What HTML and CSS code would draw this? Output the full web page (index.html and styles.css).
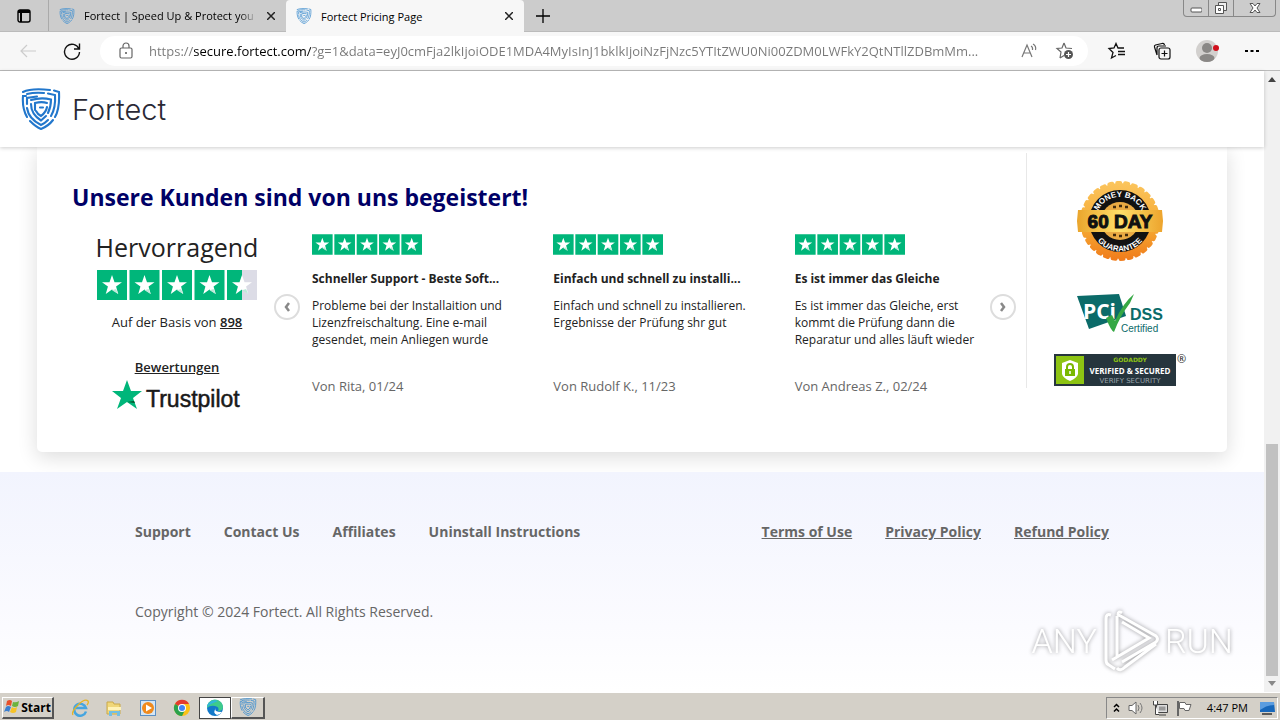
FILE: index.html
```html
<!DOCTYPE html>
<html lang="de">
<head>
    <meta charset="UTF-8">
    <meta name="viewport" content="width=device-width, initial-scale=1.0">
    <title>Fortect Pricing Page</title>
    <link rel="stylesheet" href="styles.css">
</head>
<body>
    <!-- Shared shapes -->
    <svg class="defs" width="0" height="0" aria-hidden="true">
        <symbol id="shield" viewBox="0 0 40 42">
            <g fill="none" stroke="currentColor" stroke-width="2.1" stroke-linecap="round">
                <path d="M2 4C8 1 20 1 29 2M33 2.500L38 4C38.500 14 38 22 34 29M32 32C29 36 25 39 20 41C15 39 12 36 9 33M6 29C2 22 1.500 14 2 8H5"/>
                <path d="M6 6C12 4.500 18 4.500 23 5M27 5.500L34 7C34.500 14 33.500 22 30 28M27 32C25 34 23 36 20 37C12 33 7 27 6 20M6 16V10L16 8.500"/>
                <path d="M10 12C17 10 24 10 30 11.500C30 17 29 21 27 25M25 28L20 32.500C13 28 10 23 10 16"/>
                <path d="M14 22V15C18 14 23 14 26 15M26 19C25.500 22 24 25 20 28C18 27 16 25 15 23M19 19.500H22"/>
            </g>
        </symbol>
        <symbol id="star" viewBox="0 0 96 96">
            <path fill="#fff" d="M48 16L56 39H80L61 53L68 77L48 62L28 77L35 53L16 39H40Z"/>
            <path fill="#bfe9da" d="M48 65L61 61L68 77Z"/>
        </symbol>
        <symbol id="stars" viewBox="0 0 512 96">
            <path fill="#00b67a" d="M0 0H96V96H0ZM104 0H200V96H104ZM208 0H304V96H208ZM312 0H408V96H312ZM416 0H512V96H416Z"/>
            <use href="#star" x="0" width="96" height="96"/>
            <use href="#star" x="104" width="96" height="96"/>
            <use href="#star" x="208" width="96" height="96"/>
            <use href="#star" x="312" width="96" height="96"/>
            <use href="#star" x="416" width="96" height="96"/>
        </symbol>
    </svg>

    <!-- Browser tabs -->
    <div class="tabs">
        <button class="tab-menu" aria-label="Tab actions">
            <svg width="14" height="14" viewBox="0 0 14 14"><rect x="1" y="1" width="12" height="12" rx="2" fill="none" stroke="#000" stroke-width="1.400"/><path d="M1 1H13V4H1ZM3 4H5V13H3Z"/></svg>
        </button>
        <div class="tab">
            <svg class="tab-icon" width="16" height="16"><use href="#shield"/></svg>
            <span class="tab-title tab-fade">Fortect | Speed Up &amp; Protect you</span>
            <button class="tab-close" aria-label="Close tab"><svg width="8" height="8" viewBox="0 0 8 8"><path d="M0 0L8 8M8 0L0 8" stroke="#222" stroke-width="1.500"/></svg></button>
        </div>
        <div class="tab tab-active">
            <svg class="tab-icon" width="16" height="16"><use href="#shield"/></svg>
            <span class="tab-title">Fortect Pricing Page</span>
            <button class="tab-close" aria-label="Close tab"><svg width="8" height="8" viewBox="0 0 8 8"><path d="M0 0L8 8M8 0L0 8" stroke="#222" stroke-width="1.500"/></svg></button>
        </div>
        <button class="tab-new" aria-label="New tab"><svg width="14" height="14" viewBox="0 0 14 14"><path d="M7 0V14M0 7H14" stroke="#000" stroke-width="1.300"/></svg></button>
        <div class="window-buttons">
            <button aria-label="Minimize"><svg width="12" height="12" viewBox="0 0 12 12"><rect x="1" y="6" width="11" height="4" rx="1" fill="#fff" stroke="#555"/></svg></button>
            <button aria-label="Restore"><svg width="14" height="14" viewBox="0 0 14 14"><path d="M4.500 1.500H12.500V9.500H4.500Z" fill="#eee" stroke="#555"/><path d="M1.500 4.500H9.500V12.500H1.500Z" fill="#fff" stroke="#555"/><path d="M4.500 7.500H6.500V9.500H4.500Z" fill="none" stroke="#555"/></svg></button>
            <button class="window-close" aria-label="Close"><svg width="12" height="12" viewBox="0 0 12 12"><path d="M1 1.500H4L6 4L8 1.500H11L8 6L11 10.500H8L6 8L4 10.500H1L4 6Z" fill="#fff" stroke="#555"/></svg></button>
        </div>
    </div>

    <!-- Address bar -->
    <div class="toolbar">
        <button class="nav-button" aria-label="Back" disabled><svg width="16" height="14" viewBox="0 0 16 14"><path d="M16 7H1M7 1L1 7L7 13" fill="none" stroke="#ccc" stroke-width="1.200"/></svg></button>
        <button class="nav-button" aria-label="Refresh"><svg width="18" height="18" viewBox="0 0 18 18"><path d="M16 7A7.500 7.500 0 1 0 16.500 10M16.500 1.500V7H11" fill="none" stroke="#111" stroke-width="1.400"/></svg></button>
        <div class="address">
            <svg width="14" height="18" viewBox="0 0 14 18"><rect x="1" y="6" width="12" height="10" rx="1.500" fill="none" stroke="#666" stroke-width="1.200"/><path d="M4 6V4A3 3 0 0 1 10 4V6" fill="none" stroke="#666" stroke-width="1.200"/><circle cx="7" cy="11" r="1" fill="#555"/></svg>
            <input class="address-input" type="text" aria-label="Address" value="https://secure.fortect.com/?g=1&amp;data=eyJ0cmFja2lkIjoiODE1MDA4MyIsInJ1bklkIjoiNzFjNzc5YTItZWU0Ni00ZDM0LWFkY2QtNTllZDBmMm...">
            <button class="address-button" aria-label="Read aloud"><svg width="18" height="18" viewBox="0 0 18 18"><path d="M2 15L7 3L12 15M4 11H10M11 4Q13 5 12.500 8M13 2Q16.500 4 15.500 8" fill="none" stroke="#777" stroke-width="1.200"/></svg></button>
            <button class="address-button" aria-label="Add to favourites"><svg width="20" height="20" viewBox="0 0 20 20"><path d="M9 2L11 7L17 7.500M5 17L6 11L2 7.500L7 7L9 2M5 17L9 14.500" fill="none" stroke="#666" stroke-width="1.200"/><circle cx="13.500" cy="13.500" r="4.500" fill="#555"/><path d="M13.500 11V16M11 13.500H16" stroke="#fff" stroke-width="1.200"/></svg></button>
        </div>
        <div class="tools">
            <button aria-label="Favourites"><svg width="20" height="18" viewBox="0 0 20 18"><path d="M17 6H11L9 1.500L7 6L2 6.500L6 10.500L4.500 16L9 13.500M11 9.500H18M11 12.500H18" fill="none" stroke="#111" stroke-width="1.300"/></svg></button>
            <button aria-label="Collections"><svg width="18" height="18" viewBox="0 0 18 18"><path d="M4 13L1.500 5Q1 3.500 2.500 3L9 1.500Q11 1 11.500 3M4 13V6Q4 4 6 4H13" fill="none" stroke="#111" stroke-width="1.200"/><rect x="6" y="6" width="11" height="11" rx="2" fill="#f7f7f7" stroke="#111" stroke-width="1.200"/><path d="M11.500 8.500V14.500M8.500 11.500H14.500" stroke="#111" stroke-width="1.200"/></svg></button>
            <button aria-label="Profile"><svg width="24" height="24" viewBox="0 0 24 24"><circle cx="12" cy="12" r="11" fill="#d2d0ce"/><circle cx="12" cy="9" r="5" fill="#8a8886"/><ellipse cx="12" cy="19" rx="7.500" ry="4" fill="#8a8886"/><circle cx="21" cy="9" r="3" fill="#d0101c"/></svg></button>
            <button aria-label="Settings"><svg width="14" height="4" viewBox="0 0 14 4"><path d="M0 1H3V3H0ZM5.500 1H8.500V3H5.500ZM11 1H14V3H11Z"/></svg></button>
        </div>
    </div>

    <div class="viewport">
        <div class="page">
            <header class="page-header">
                <svg class="logo-shield" width="40" height="42"><use href="#shield"/></svg>
                <span class="logo-name">Fortect</span>
            </header>

            <main class="main">
                <div class="card">
                    <section class="reviews">
                        <h2>Unsere Kunden sind von uns begeistert!</h2>
                        <div class="carousel">
                            <div class="rating">
                                <p class="rating-word">Hervorragend</p>
                                <svg class="rating-stars" width="160" height="30" viewBox="0 0 512 96">
                                    <path fill="#00b67a" d="M0 0H96V96H0ZM104 0H200V96H104ZM208 0H304V96H208ZM312 0H408V96H312ZM416 0H464V96H416Z"/>
                                    <path fill="#dcdce6" d="M464 0H512V96H464Z"/>
                                    <use href="#star" x="0" width="96" height="96"/>
                                    <use href="#star" x="104" width="96" height="96"/>
                                    <use href="#star" x="208" width="96" height="96"/>
                                    <use href="#star" x="312" width="96" height="96"/>
                                    <use href="#star" x="416" width="96" height="96"/>
                                </svg>
                                <p class="rating-count">Auf der Basis von <a href="#">898 <span>Bewertungen</span></a></p>
                                <svg class="trustpilot" width="132" height="34" viewBox="0 0 132 34" role="img" aria-label="Trustpilot">
                                    <path fill="#00b67a" d="M16 1L20 12H31L22 19L26 30L16 23L6 30L10 19L1 12H12Z"/>
                                    <path fill="#005128" d="M23 22L24 24L16 23Z"/>
                                    <text x="35" y="28" font-size="23" fill="#191919" stroke="#191919" stroke-width=".5">Trustpilot</text>
                                </svg>
                            </div>
                            <button class="arrow" aria-label="Zurück"><svg width="8" height="10" viewBox="0 0 8 10"><path d="M6 1L3 5L6 9" fill="none" stroke="#888" stroke-width="2.500"/></svg></button>
                            <div class="review-list">
                                <article class="review">
                                    <svg width="110" height="21"><use href="#stars"/></svg>
                                    <h3>Schneller Support - Beste Soft...</h3>
                                    <p>Probleme bei der Installaition und Lizenzfreischaltung. Eine e-mail gesendet, mein Anliegen wurde</p>
                                    <footer>Von Rita, 01/24</footer>
                                </article>
                                <article class="review">
                                    <svg width="110" height="21"><use href="#stars"/></svg>
                                    <h3>Einfach und schnell zu installi...</h3>
                                    <p>Einfach und schnell zu installieren. Ergebnisse der Prüfung shr gut</p>
                                    <footer>Von Rudolf K., 11/23</footer>
                                </article>
                                <article class="review">
                                    <svg width="110" height="21"><use href="#stars"/></svg>
                                    <h3>Es ist immer das Gleiche</h3>
                                    <p>Es ist immer das Gleiche, erst kommt die Prüfung dann die Reparatur und alles läuft wieder</p>
                                    <footer>Von Andreas Z., 02/24</footer>
                                </article>
                            </div>
                            <button class="arrow" aria-label="Weiter"><svg width="8" height="10" viewBox="0 0 8 10"><path d="M2 1L5 5L2 9" fill="none" stroke="#888" stroke-width="2.500"/></svg></button>
                        </div>
                    </section>

                    <aside class="badges">
                        <svg class="seal" width="86" height="82" viewBox="0 0 86 82">
                            <defs>
                                <linearGradient id="gold" x1="0" y1="0" x2="0" y2="1"><stop offset="0" stop-color="#fbc45c"/><stop offset=".6" stop-color="#f5a832"/><stop offset="1" stop-color="#f07d1c"/></linearGradient>
                                <linearGradient id="ribbon" x1="0" y1="0" x2="1" y2="0"><stop offset="0" stop-color="#eaa52c"/><stop offset=".5" stop-color="#ffdf69"/><stop offset="1" stop-color="#eda42d"/></linearGradient>
                                <path id="seal-top" d="M20 34A24 24 0 0 1 66 34"/>
                                <path id="seal-bottom" d="M15 50A29 29 0 0 0 71 50"/>
                            </defs>
                            <circle cx="43" cy="41" r="38" fill="url(#gold)"/>
                            <circle cx="43" cy="41" r="38" fill="none" stroke="url(#gold)" stroke-width="4" stroke-linecap="round" stroke-dasharray="3 5"/>
                            <circle cx="43" cy="41" r="31" fill="#111"/>
                            <circle cx="43" cy="41" r="19" fill="#e9aa43"/>
                            <path d="M36 27H39M42 26H45M48 27H51M36 55H39M42 56H45M48 55H51" stroke="#422b0c" stroke-width="2.500"/>
                            <path d="M1 30H85L86 41L85 52H1L0 41Z" fill="url(#ribbon)"/>
                            <text class="seal-days" x="43" y="48" text-anchor="middle">60 DAY</text>
                            <text class="seal-arc"><textPath href="#seal-top" startOffset="50%" text-anchor="middle">MONEY BACK</textPath></text>
                            <text class="seal-arc"><textPath href="#seal-bottom" startOffset="50%" text-anchor="middle">GUARANTEE</textPath></text>
                        </svg>
                        <svg class="pci" width="88" height="42" viewBox="0 0 88 42">
                            <path fill="#0b6b69" d="M1 3L43 1L50 23L13 36Z"/>
                            <text class="pci-name" x="7" y="26">PCi</text>
                            <text class="pci-dss" x="54" y="27">DSS</text>
                            <text class="pci-certified" x="45" y="39">Certified</text>
                            <path fill="#35a844" d="M30 25L36 22L39 28Q47 10 58 1L54 10Q44 23 38 39Q35 38 30 25Z"/>
                        </svg>
                        <a class="secured" href="#">
                            <svg width="122" height="32" viewBox="0 0 122 32">
                                <path fill="#26353d" d="M0 0H122V32H0Z"/>
                                <path fill="#8dc413" d="M2 2H30V30H2Z"/>
                                <path fill="#fff" d="M16 6L24 9V20Q23 24 16 27Q9 24 8 20V9Z"/>
                                <path fill="#7ab800" d="M11 15H21V22H11Z"/>
                                <path d="M13 15V13Q13 10 16 10Q19 10 19 13V15" fill="none" stroke="#7ab800" stroke-width="2"/>
                                <path d="M16 17V20" stroke="#fff" stroke-width="1.500"/>
                                <text class="secured-brand" x="76" y="8" text-anchor="middle">GODADDY</text>
                                <text class="secured-main" x="76" y="20" text-anchor="middle">VERIFIED &amp; SECURED</text>
                                <text class="secured-sub" x="76" y="29" text-anchor="middle">VERIFY SECURITY</text>
                            </svg>
                            <span>®</span>
                        </a>
                    </aside>
                </div>
            </main>

            <footer class="page-footer">
                <div class="footer-links">
                    <nav class="links">
                        <a href="#">Support</a>
                        <a href="#">Contact Us</a>
                        <a href="#">Affiliates</a>
                        <a href="#">Uninstall Instructions</a>
                    </nav>
                    <nav class="links legal">
                        <a href="#">Terms of Use</a>
                        <a href="#">Privacy Policy</a>
                        <a href="#">Refund Policy</a>
                    </nav>
                </div>
                <p>Copyright © 2024 Fortect. All Rights Reserved.</p>
            </footer>
        </div>

        <div class="scrollbar">
            <svg width="8" height="5" viewBox="0 0 8 5"><path fill="#444" d="M0 5L4 0L8 5Z"/></svg>
            <div class="scroll-track"><div class="scroll-thumb"></div></div>
            <svg width="8" height="5" viewBox="0 0 8 5"><path fill="#888" d="M0 0L4 5L8 0Z"/></svg>
        </div>

        <div class="watermark">
            <span>ANY</span>
            <svg width="62" height="66" viewBox="0 0 62 66">
                <path d="M11 7Q6 5 6 11V52Q6 56 9 57L15 61M17 8V48M17 6L56 28Q59 31 56 34L22 54M18 7Q18 2 22 5M22 14L49 30L12 52M17 60Q20 64 25 59L56 36" fill="none" stroke="#fff" stroke-width="3"/>
            </svg>
            <span>RUN</span>
        </div>
    </div>

    <!-- Taskbar -->
    <div class="taskbar">
        <button class="start">
            <svg width="16" height="16" viewBox="0 0 16 16"><path fill="#e8502a" d="M3 2Q6 0 8 2L7 7Q4 5 2 7Z"/><path fill="#6cb33e" d="M9 3Q12 4 15 2L14 7Q11 9 8 7Z"/><path fill="#3b7fd0" d="M2 8Q4 6 7 8L5 13Q3 11 0 13Z"/><path fill="#f7c326" d="M8 8Q10 10 13 8L12 13Q9 15 6 13Z"/></svg>
            Start
        </button>
        <div class="launchers">
            <button aria-label="Internet Explorer"><svg width="18" height="18" viewBox="0 0 18 18"><path d="M15 12.500A6 6 0 1 1 15 9H5" fill="none" stroke="#45a5e0" stroke-width="2.500"/><path d="M2 16Q0 13 7 6T17 2Q18 4 16 6" fill="none" stroke="#e6b422" stroke-width="1.300"/></svg></button>
            <button aria-label="Explorer"><svg width="18" height="18" viewBox="0 0 18 18"><path d="M2 3H8L9 5H15V15H2Z" fill="#f0d77a" stroke="#c9a94a"/><path d="M3 8H16V11H3Z" fill="#fff3b8"/><path d="M4 17V12H15V17H12V14H7V17Z" fill="#73bfe3"/></svg></button>
            <button aria-label="Media Player"><svg width="18" height="18" viewBox="0 0 18 18"><rect x="1.500" y="1.500" width="15" height="15" fill="#d5e6f5" stroke="#5a8fc4"/><circle cx="9" cy="9" r="6" fill="#f08a1d"/><path d="M7 5.500L13 9L7 12.500Z" fill="#fff"/></svg></button>
            <button aria-label="Chrome"><svg width="18" height="18" viewBox="0 0 18 18"><circle cx="9" cy="9" r="8" fill="#fbc116"/><path d="M9 9L2 5A8 8 0 0 1 16 5H9Z" fill="#e33b2e"/><path d="M9 9L2 5A8 8 0 0 0 9 17L12 11Z" fill="#2ba24c"/><circle cx="9" cy="9" r="4" fill="#fff"/><circle cx="9" cy="9" r="3" fill="#4285f4"/></svg></button>
            <button class="pressed" aria-label="Edge"><svg width="18" height="18" viewBox="0 0 18 18"><circle cx="9" cy="9" r="8" fill="#1379c9"/><path d="M1 9A8 8 0 0 1 17 8Q17 12 12 12Q14 8 9 7Q4 6 1 9Z" fill="#3ecb8b"/><path d="M1 8A8 8 0 0 1 12 2Q6 4 1 8Z" fill="#31b6dd"/><path d="M10 9Q7 13 16 13Q14 16 11 16Q6 14 10 9Z" fill="#fff"/></svg></button>
            <button class="raised" aria-label="Fortect"><svg class="tab-icon" width="18" height="18"><use href="#shield"/></svg></button>
        </div>
        <div class="tray">
            <svg width="7" height="10" viewBox="0 0 7 10"><path d="M1 4L3.500 1.500L6 4M1 8.500L3.500 6L6 8.500" fill="none" stroke="#000" stroke-width="1.500"/></svg>
            <svg width="16" height="16" viewBox="0 0 16 16"><path d="M1 5.500H4L8 2V14L4 10.500H1Z" fill="#fff" stroke="#666"/><path d="M10 5Q12 8 10 11M12 3Q16 8 12 13" fill="none" stroke="#777"/></svg>
            <svg width="16" height="16" viewBox="0 0 16 16"><path d="M4.500 4.500H15.500V12.500H4.500ZM7 15H14" fill="#ddd" stroke="#444"/><path d="M7 6.500H13.500V10.500H7Z" fill="#999"/><path d="M1.500 1V5H5.500V1M3.500 5V14.500H7" fill="#fff" stroke="#444"/></svg>
            <svg width="16" height="16" viewBox="0 0 16 16"><path d="M2 1V16" stroke="#666" stroke-width="2"/><path d="M3.500 2.500H9L10 4.500H15L13 10.500H9L8 8.500H3.500Z" fill="#fff" stroke="#666"/></svg>
            <span class="clock">4:47 PM</span>
            <svg width="16" height="14" viewBox="0 0 16 14"><path d="M1 1H15L16 11H1Z" fill="#1767ba"/><path d="M1 1H15V4Q8 4 1 9Z" fill="#5b9de0"/><path d="M3 13H13" stroke="#333" stroke-width="1.500"/></svg>
        </div>
    </div>
</body>
</html>
```
FILE: styles.css
```css
* {
    box-sizing: border-box;
}
body {
    display: flex;
    flex-direction: column;
    height: 100vh;
    margin: 0;
    overflow: hidden;
    background: white;
    color: #222;
    font-family: 'Open Sans', 'Noto Sans', sans-serif;
}
h2, h3, p {
    margin: 0;
}
button {
    display: flex;
    align-items: center;
    justify-content: center;
    padding: 0;
    background: none;
    border: none;
    color: inherit;
    font-family: inherit;
}
svg {
    display: block;
    flex: none;
}
.defs {
    position: absolute;
}

/* Browser window */
.tabs {
    display: flex;
    height: 32px;
    flex: none;
    background: #ccc;
    border-bottom: 1px solid #bbb;
    font-size: 11px;
    color: #000;
}
.tab-menu {
    width: 48px;
}
.tab {
    display: flex;
    align-items: center;
    gap: 9px;
    width: 238px;
    padding: 0 10px;
    border-left: 1px solid #aaa;
}
.tab-active {
    height: 32px;
    background: #f7f7f7;
    border-left: none;
    border-radius: 4px 4px 0 0;
}
.tab-icon {
    color: #4a94d0;
}
.tab-title {
    flex: 1;
    white-space: nowrap;
}
.tab-fade {
    -webkit-mask-image: linear-gradient(to right, #000 90%, transparent);
    mask-image: linear-gradient(to right, #000 90%, transparent);
}
.tab-close {
    width: 10px;
}
.tab-new {
    width: 38px;
}
.window-buttons {
    display: flex;
    height: 17px;
    margin: 0 4px 0 auto;
    border: 1px solid #888;
    border-top: none;
    border-radius: 0 0 4px 4px;
}
.window-buttons button {
    width: 25px;
    border-right: 1px solid #888;
}
.window-buttons .window-close {
    width: 41px;
    border-right: none;
}
.toolbar {
    display: flex;
    align-items: center;
    height: 39px;
    flex: none;
    padding: 0 6px;
    background: #f7f7f7;
    border-bottom: 1px solid #bbb;
}
.nav-button {
    width: 44px;
    height: 30px;
}
.address {
    display: flex;
    align-items: center;
    flex: 1;
    height: 30px;
    margin-left: 6px;
    padding: 0 5px 0 19px;
    background: white;
    border-radius: 15px;
}
.address-input {
    flex: 1;
    min-width: 0;
    margin-left: 16px;
    padding: 0;
    border: none;
    outline: none;
    background: linear-gradient(to right, #777 45px, #000 45px, #000 162px, #777 162px);
    -webkit-background-clip: text;
    background-clip: text;
    color: transparent;
    font-family: inherit;
    font-size: 13px;
}
.address-button {
    width: 36px;
}
.tools {
    display: flex;
    align-items: center;
    margin-left: 6px;
}
.tools button {
    width: 45px;
    height: 30px;
}

/* Web page */
.viewport {
    position: relative;
    display: flex;
    flex: 1;
    min-height: 0;
}
.page {
    display: flex;
    flex-direction: column;
    flex: 1;
}
.page-header {
    position: relative;
    z-index: 1;
    display: flex;
    align-items: center;
    gap: 11px;
    height: 76px;
    padding: 0 21px;
    background: white;
    box-shadow: 0 1px 4px rgba(0, 0, 0, 0.2);
}
.logo-shield {
    color: #2277cc;
}
.logo-name {
    color: #2a2935;
    font-family: Inter, sans-serif;
    font-size: 29px;
    font-weight: 300;
}
.main {
    padding: 0 37px 20px;
}
.card {
    display: grid;
    grid-template-columns: 1fr 200px;
    padding: 6px 0 64px;
    border-radius: 0 0 5px 5px;
    box-shadow: 0 5px 20px rgba(0, 0, 0, 0.14);
}
.reviews {
    padding: 24px 10px 0 35px;
    border-right: 1px solid #e8e8e8;
}
.reviews h2 {
    color: #000066;
    font-size: 23px;
    line-height: 40px;
}
.carousel {
    display: flex;
    height: 171px;
    padding-top: 17px;
}
.rating {
    display: flex;
    flex-direction: column;
    align-items: center;
    width: 160px;
    margin: 0 17px 0 25px;
    flex: none;
}
.rating-word {
    font-size: 25px;
    line-height: 26px;
}
.rating-stars {
    margin-top: 10px;
}
.rating-count {
    margin-top: 13px;
    font-size: 13px;
    line-height: 18px;
    text-align: center;
}
.rating-count a {
    color: inherit;
    font-weight: 600;
}
.rating-count span {
    display: block;
    margin-top: 27px;
    text-decoration: underline;
}
.trustpilot {
    margin-top: 3px;
    font-family: 'Liberation Sans', sans-serif;
}
.arrow {
    width: 26px;
    height: 26px;
    margin-top: 60px;
    flex: none;
    border: 2px solid #ddd;
    border-radius: 50%;
}
.review-list {
    display: grid;
    grid-template-columns: repeat(3, 1fr);
    gap: 46px;
    flex: 1;
    margin-left: 12px;
}
.review h3 {
    margin-top: 15px;
    font-size: 12px;
    line-height: 17px;
    white-space: nowrap;
}
.review p {
    height: 51px;
    margin-top: 10px;
    font-size: 12px;
    line-height: 17px;
}
.review footer {
    margin-top: 29px;
    color: #666;
    font-size: 13px;
    line-height: 18px;
}
.badges {
    display: flex;
    flex-direction: column;
    align-items: center;
    padding: 27px 14px 0 0;
}
.pci {
    margin-top: 31px;
}
.secured {
    display: flex;
    gap: 1px;
    margin-top: 19px;
    color: #222;
    font-size: 11px;
    line-height: 10px;
    text-decoration: none;
}
.seal-days {
    font: bold 19px 'Liberation Sans', sans-serif;
    fill: #111;
    stroke: #111;
}
.seal-arc {
    font: bold 8px 'Liberation Sans', sans-serif;
    fill: white;
}
.pci-name {
    font: bold 21px 'Open Sans', sans-serif;
    fill: white;
}
.pci-dss {
    font: bold 16px 'Liberation Sans', sans-serif;
    fill: #0b6b69;
}
.pci-certified {
    font: 10px 'Liberation Sans', sans-serif;
    fill: #0b6b69;
}
.secured-brand {
    font: bold 6px 'DejaVu Sans', sans-serif;
    fill: #8dc413;
}
.secured-main {
    font: bold 8px 'Open Sans', sans-serif;
    fill: white;
}
.secured-sub {
    font: 7px 'DejaVu Sans', sans-serif;
    fill: #9aa4aa;
}
.page-footer {
    flex: 1;
    padding: 50px 155px 0 135px;
    background: linear-gradient(#f2f4fe, #fbfbff 70%, #fff);
    color: #666;
    font-size: 14px;
    line-height: 20px;
}
.footer-links {
    display: flex;
    justify-content: space-between;
    margin-bottom: 60px;
}
.links {
    display: flex;
    gap: 33px;
}
.links a {
    color: inherit;
    font-weight: 700;
    text-decoration: none;
}
.legal a {
    text-decoration: underline;
}
.scrollbar {
    display: flex;
    flex-direction: column;
    align-items: center;
    width: 16px;
    padding: 6px 0;
    background: #f1f1f1;
}
.scroll-track {
    display: flex;
    align-items: flex-end;
    flex: 1;
    padding-bottom: 5px;
}
.scroll-thumb {
    width: 12px;
    height: 39%;
    background: #c1c1c1;
}
.watermark {
    position: absolute;
    right: 47px;
    bottom: 18px;
    display: flex;
    align-items: center;
    gap: 3px;
    color: white;
    font-family: Roboto, sans-serif;
    font-size: 34px;
    font-weight: 300;
    filter: drop-shadow(0 0 2px rgba(0, 0, 0, 0.4));
}

/* Desktop taskbar */
.taskbar {
    display: flex;
    align-items: center;
    height: 28px;
    flex: none;
    padding: 2px 2px 0;
    background: #d4d0c8;
    border-top: 1px solid #fff;
    box-shadow: 0 -1px 0 #d4d0c8;
    color: #000;
    font-size: 12px;
}
.start, .raised {
    border: 1px solid #fff;
    border-right: 2px solid #555;
    border-bottom: 2px solid #555;
}
.start {
    gap: 1px;
    width: 52px;
    height: 22px;
    font-size: 12px;
    font-weight: bold;
}
.launchers {
    display: flex;
    margin-left: 9px;
}
.launchers button {
    width: 34px;
    height: 22px;
}
.launchers .pressed {
    width: 32px;
    background: white;
    border: 1px solid #444;
}
.tray {
    display: flex;
    align-items: center;
    gap: 8px;
    height: 22px;
    margin-left: auto;
    padding: 0 2px 0 6px;
    border: 1px solid #fff;
    border-top-color: #888;
    border-left-color: #888;
}
.clock {
    margin: 0 3px 0 7px;
    font-size: 11px;
}
```
